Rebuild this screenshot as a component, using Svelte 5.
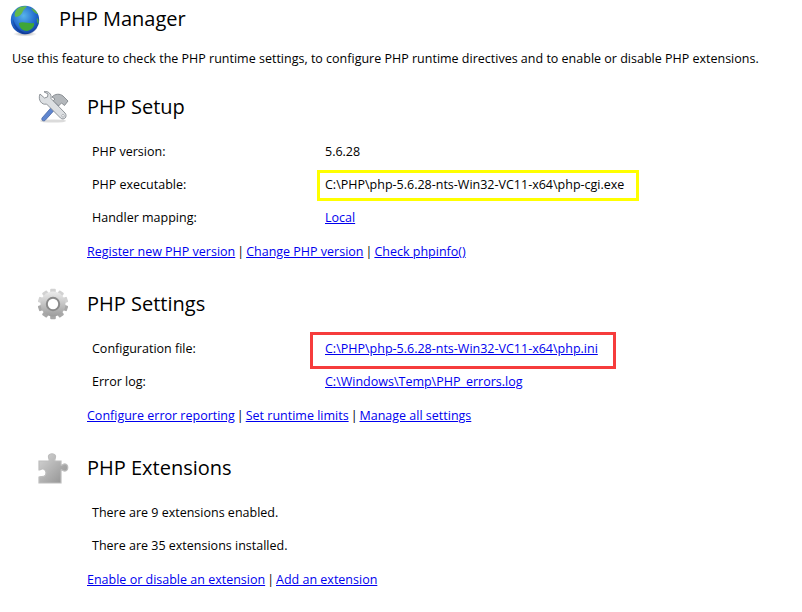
<script>
    const sections = [
        {
            title: 'PHP Setup',
            icon: 'tools',
            rows: [
                { label: 'PHP version:', value: '5.6.28' },
                { label: 'PHP executable:', value: 'C:\\PHP\\php-5.6.28-nts-Win32-VC11-x64\\php-cgi.exe', mark: 'yellow' },
                { label: 'Handler mapping:', value: 'Local', link: true }
            ],
            links: ['Register new PHP version', 'Change PHP version', 'Check phpinfo()']
        },
        {
            title: 'PHP Settings',
            icon: 'gear',
            rows: [
                { label: 'Configuration file:', value: 'C:\\PHP\\php-5.6.28-nts-Win32-VC11-x64\\php.ini', link: true, mark: 'red' },
                { label: 'Error log:', value: 'C:\\Windows\\Temp\\PHP_errors.log', link: true }
            ],
            links: ['Configure error reporting', 'Set runtime limits', 'Manage all settings']
        },
        {
            title: 'PHP Extensions',
            icon: 'puzzle',
            rows: [
                { label: 'There are 9 extensions enabled.' },
                { label: 'There are 35 extensions installed.' }
            ],
            links: ['Enable or disable an extension', 'Add an extension']
        }
    ];

    const teeth = [0, 36, 72, 108, 144, 180, 216, 252, 288, 324];
</script>

<main class="page">
    <header class="head">
        <svg class="globe" viewBox="0 0 30 32" width="30" height="32" aria-hidden="true">
            <defs>
                <radialGradient id="sea" cx="0.45" cy="0.35" r="0.75">
                    <stop offset="0" stop-color="#58b4ea" />
                    <stop offset="0.6" stop-color="#1f66cc" />
                    <stop offset="1" stop-color="#0f2f8c" />
                </radialGradient>
                <radialGradient id="shade" cx="0.5" cy="0.5" r="0.5">
                    <stop offset="0" stop-color="#777" stop-opacity="0.6" />
                    <stop offset="1" stop-color="#777" stop-opacity="0" />
                </radialGradient>
            </defs>
            <ellipse cx="15" cy="29" rx="12" ry="2.6" fill="url(#shade)" />
            <circle cx="15" cy="15" r="14.2" fill="url(#sea)" />
            <path d="M7 4 C10 1.5 14 1 17 1.5 C16 3 14 4 13 6 C12 9 9 12 5.5 12 C4 10 4.5 7 7 4 Z" fill="#62b84c" />
            <path d="M21 3 C24 4 26.5 6 28 9 C26 9 23 7 21 3 Z" fill="#5cae4a" />
            <path d="M9 18 C13 16 19 19 24 18 C25 21 22 25 17 26 C13 26 9 23 9 18 Z" fill="#3fa637" />
            <path d="M27 13 C28.5 14 29 16 28.5 19 C27 18 26.5 15 27 13 Z" fill="#4ea846" />
            <path d="M3 14 C5 20 9 26 15 28 C20 29 25 26 27.5 22 C25 29 14 32 7 25 C4 22 3 18 3 14 Z" fill="#0b2a80" opacity="0.45" />
        </svg>
        <h1>PHP Manager</h1>
    </header>

    <p class="intro">Use this feature to check the PHP runtime settings, to configure PHP runtime directives and to enable or disable PHP extensions.</p>

    {#each sections as section}
        <section class="section">
            <div class="section-head">
                <span class="icon">
                    {#if section.icon === 'tools'}
                        <svg viewBox="0 0 32 32" width="32" height="32" aria-hidden="true">
                            <ellipse cx="16" cy="30" rx="13" ry="1.6" fill="#999" opacity="0.35" />
                            <!-- hammer -->
                            <path d="M5 27 L19 11 L22 14 L8 29.5 C6 30.5 4 29 5 27 Z" fill="#5f86cf" stroke="#3d5c9c" stroke-width="0.7" />
                            <path d="M15 6 C18 2.5 23 2.5 26 5 L31 10 L27.5 14.5 L24.5 12 L21.5 15 L16 10 L18 8 Z" fill="#b4b8bc" stroke="#777c82" stroke-width="0.8" />
                            <!-- wrench -->
                            <path d="M3 3 L7.5 7 L10.5 6 L11 3 L7 0.8 C11 -0.5 15 3 14 7.5 L28 22 C31 25.5 27 30 23.5 27 L9.5 13 C5 14.5 0.5 9 3 3 Z" fill="#dcdfe2" stroke="#858a90" stroke-width="0.9" />
                            <circle cx="26" cy="24.8" r="1.3" fill="#fff" stroke="#8a8f95" stroke-width="0.6" />
                        </svg>
                    {:else if section.icon === 'gear'}
                        <svg viewBox="0 0 32 32" width="32" height="32" aria-hidden="true">
                            <defs>
                                <linearGradient id="steel" x1="0" y1="0" x2="0" y2="1">
                                    <stop offset="0" stop-color="#ececec" />
                                    <stop offset="1" stop-color="#9c9c9c" />
                                </linearGradient>
                            </defs>
                            {#each teeth as a}
                                <rect x="13.2" y="0.8" width="5.6" height="7" rx="1" fill={a > 90 && a < 270 ? '#a8a8a8' : '#d2d2d2'} transform="rotate({a} 16 16)" />
                            {/each}
                            <circle cx="16" cy="16" r="12.5" fill="url(#steel)" />
                            <circle cx="16" cy="16" r="7.2" fill="#8a8a8a" />
                            <circle cx="16" cy="16" r="5.2" fill="#fff" />
                        </svg>
                    {:else}
                        <svg viewBox="0 0 32 32" width="32" height="32" aria-hidden="true">
                            <defs>
                                <linearGradient id="piece" x1="0" y1="0" x2="1" y2="1">
                                    <stop offset="0" stop-color="#d6d6d6" />
                                    <stop offset="1" stop-color="#8e8e8e" />
                                </linearGradient>
                            </defs>
                            <path d="M2 9 H12 C13 8 11 6 11.5 4 C12.5 1 17.5 1 18.5 4 C19 6 17 8 18 9 H24 V13 C25 14 26 11.5 28.5 12 C31.5 13 31.5 18 28.5 19 C26 19.5 25 17 24 18 V31 H2 V25 C4 24 7 25.5 8.5 23 C10 20 8 16.5 5 17 C4 17.2 3 18 2 18 Z" fill="url(#piece)" stroke="#bdbdbd" stroke-width="1.2" />
                        </svg>
                    {/if}
                </span>
                <h2>{section.title}</h2>
            </div>

            <div class="rows">
                {#each section.rows as row}
                    <div class="row">
                        <span>{row.label}</span>
                        {#if row.value}
                            <span class="value">
                                {#if row.link}
                                    <a href="#top">{row.value}</a>
                                {:else}
                                    {row.value}
                                {/if}
                                {#if row.mark}
                                    <i class="mark {row.mark}"></i>
                                {/if}
                            </span>
                        {/if}
                    </div>
                {/each}
            </div>

            <div class="links">
                {#each section.links as link, i}
                    {#if i > 0}<span>|</span>{/if}
                    <a href="#top">{link}</a>
                {/each}
            </div>
        </section>
    {/each}
</main>

<style>
    :global(body) {
        background: #fff;
    }

    .page {
        width: 802px;
        height: 612px;
        box-sizing: border-box;
        overflow: hidden;
        padding: 5px 0 0 10px;
        font-family: "Open Sans", "Noto Sans", sans-serif;
        font-size: 12.5px;
        color: #000;
    }

    .head {
        display: flex;
        align-items: flex-start;
        gap: 19px;
        height: 38px;
    }

    h1 {
        margin: 1px 0 0;
        font-size: 20px;
        line-height: 26px;
        font-weight: 400;
    }

    .intro {
        margin: 7px 0 0 2px;
        line-height: 18px;
        white-space: nowrap;
    }

    .section {
        padding-left: 27px;
        margin-top: 26px;
    }

    .section:first-of-type {
        margin-top: 22px;
    }

    .section-head {
        display: flex;
        align-items: center;
        height: 34px;
    }

    .icon {
        display: flex;
        width: 50px;
    }

    h2 {
        margin: 0;
        font-size: 20px;
        font-weight: 400;
        line-height: 26px;
    }

    .rows {
        margin-top: 19px;
        padding-left: 55px;
    }

    .row {
        display: grid;
        grid-template-columns: 233px 1fr;
        height: 33px;
        line-height: 18px;
    }

    .value {
        position: relative;
        white-space: nowrap;
    }

    .mark {
        position: absolute;
        box-sizing: border-box;
        border-style: solid;
        border-width: 3px;
    }

    .mark.yellow {
        left: -8px;
        top: -6px;
        width: 322px;
        height: 31px;
        border-color: #ffff00;
    }

    .mark.red {
        left: -15px;
        top: -8px;
        width: 306px;
        height: 37px;
        border-color: #f63c3c;
    }

    a {
        color: #0000ee;
        text-decoration: underline;
    }

    .links {
        display: flex;
        gap: 2px;
        padding-left: 50px;
        margin-top: 1px;
        line-height: 18px;
        white-space: nowrap;
    }
</style>
